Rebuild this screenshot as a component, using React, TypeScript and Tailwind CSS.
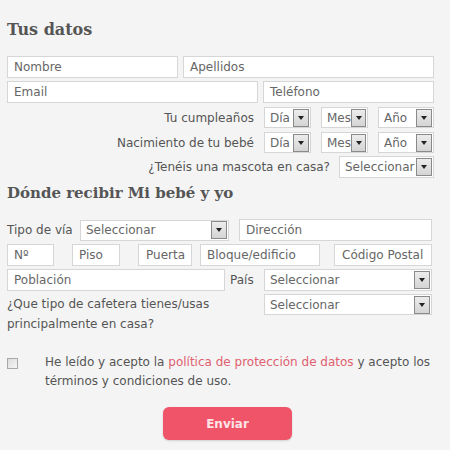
import React from "react";

const font = { fontFamily: '"DejaVu Sans", Verdana, sans-serif' };
const slab = { fontFamily: '"DejaVu Serif", Georgia, serif' };

function Input({ w, text, cls = "" }: { w: string; text: string; cls?: string }) {
  return (
    <div className={`${w} h-[22px] bg-white border border-[#d6d6d6] flex items-center pl-[6px] text-[12px] text-[#666] whitespace-nowrap overflow-hidden ${cls}`}>
      {text}
    </div>
  );
}

function Select({ w, text, h = "h-[22px]" }: { w: string; text: string; h?: string }) {
  return (
    <div className={`${w} ${h} bg-white border border-[#d6d6d6] flex items-center justify-between pl-[5px] pr-[1px] text-[12px] text-[#666] whitespace-nowrap`}>
      <span>{text}</span>
      <div className="w-[16px] h-[18px] bg-gradient-to-b from-[#ececec] to-[#d4d4d4] border border-[#8a8a8a] flex items-center justify-center">
        <div className="w-0 h-0 border-l-[3px] border-r-[3px] border-t-[4px] border-l-transparent border-r-transparent border-t-[#222]" />
      </div>
    </div>
  );
}

export default function App() {
  return (
    <div className="w-[450px] h-[450px] bg-[#f4f4f4] overflow-hidden" style={font}>
      <div className="pl-[7px] pt-[19px]">
        <h1 className="text-[16px] font-bold text-[#555] leading-[22px] h-[22px]" style={slab}>Tus datos</h1>
        <div className="mt-[15px] flex gap-[5px]">
          <Input w="w-[171px]" text="Nombre" />
          <Input w="w-[251px]" text="Apellidos" />
        </div>
        <div className="mt-[3px] flex gap-[5px]">
          <Input w="w-[251px]" text="Email" />
          <Input w="w-[171px]" text="Teléfono" />
        </div>
        <div className="mt-[4px] flex items-center w-[427px] text-[12px] text-[#555]">
          <span className="flex-1 text-right pr-[10px]">Tu cumpleaños</span>
          <Select w="w-[47px]" text="Día" h="h-[21px]" />
          <div className="w-[10px]" />
          <Select w="w-[47px]" text="Mes" h="h-[21px]" />
          <div className="w-[10px]" />
          <Select w="w-[56px]" text="Año" h="h-[21px]" />
        </div>
        <div className="mt-[4px] flex items-center w-[427px] text-[12px] text-[#555]">
          <span className="flex-1 text-right pr-[10px]">Nacimiento de tu bebé</span>
          <Select w="w-[47px]" text="Día" h="h-[21px]" />
          <div className="w-[10px]" />
          <Select w="w-[47px]" text="Mes" h="h-[21px]" />
          <div className="w-[10px]" />
          <Select w="w-[56px]" text="Año" h="h-[21px]" />
        </div>
        <div className="mt-[3px] flex items-center w-[427px] text-[12px] text-[#555]">
          <span className="flex-1 text-right pr-[9px]">¿Tenéis una mascota en casa?</span>
          <Select w="w-[95px]" text="Seleccionar" />
        </div>
        <h2 className="mt-[4px] text-[15px] font-bold text-[#555] leading-[22px] h-[22px]" style={slab}>Dónde recibir Mi bebé y yo</h2>
        <div className="mt-[15px] flex items-center text-[12px] text-[#555]">
          <span className="w-[73px]">Tipo de vía</span>
          <Select w="w-[149px]" text="Seleccionar" h="h-[21px]" />
          <div className="w-[10px]" />
          <Input w="w-[193px]" text="Dirección" cls="h-[21px]" />
        </div>
        <div className="mt-[3px] flex items-center">
          <Input w="w-[47px]" text="Nº" />
          <Input w="w-[48px]" text="Piso" cls="ml-[18px]" />
          <Input w="w-[54px]" text="Puerta" cls="ml-[18px] pl-[7px]" />
          <Input w="w-[120px]" text="Bloque/edificio" cls="ml-[8px]" />
          <Input w="w-[98px]" text="Código Postal" cls="ml-[14px] pl-[7px]" />
        </div>
        <div className="mt-[3px] flex items-center text-[12px] text-[#555]">
          <Input w="w-[218px]" text="Población" />
          <span className="w-[39px] pl-[5px]">País</span>
          <Select w="w-[168px]" text="Seleccionar" />
        </div>
        <div className="mt-[3px] flex items-start text-[12px] text-[#555]">
          <div className="w-[257px] leading-[20px]">
            <div>¿Que tipo de cafetera tienes/usas</div>
            <div>principalmente en casa?</div>
          </div>
          <Select w="w-[168px]" text="Seleccionar" h="h-[21px]" />
        </div>
        <div className="mt-[19px] flex items-start text-[12px] text-[#555]">
          <div className="w-[11px] h-[11px] mt-[5px] border border-[#a9a9a9] bg-gradient-to-br from-[#dcdcdc] to-[#f6f6f6]" />
          <div className="ml-[27px] w-[395px] leading-[19px]">
            <div className="flex whitespace-pre">
              <span>He leído y acepto la </span>
              <span className="text-[#e0606f]">política de protección de datos</span>
              <span> y acepto los</span>
            </div>
            <div>términos y condiciones de uso.</div>
          </div>
        </div>
        <div className="mt-[16px] flex">
          <div className="ml-[156px] w-[129px] h-[33px] rounded-[6px] bg-[#f05468] shadow-[0_1px_2px_rgba(0,0,0,0.15)] flex items-center justify-center text-[12px] font-bold text-[#fde3e6]">
            Enviar
          </div>
        </div>
      </div>
    </div>
  );
}
